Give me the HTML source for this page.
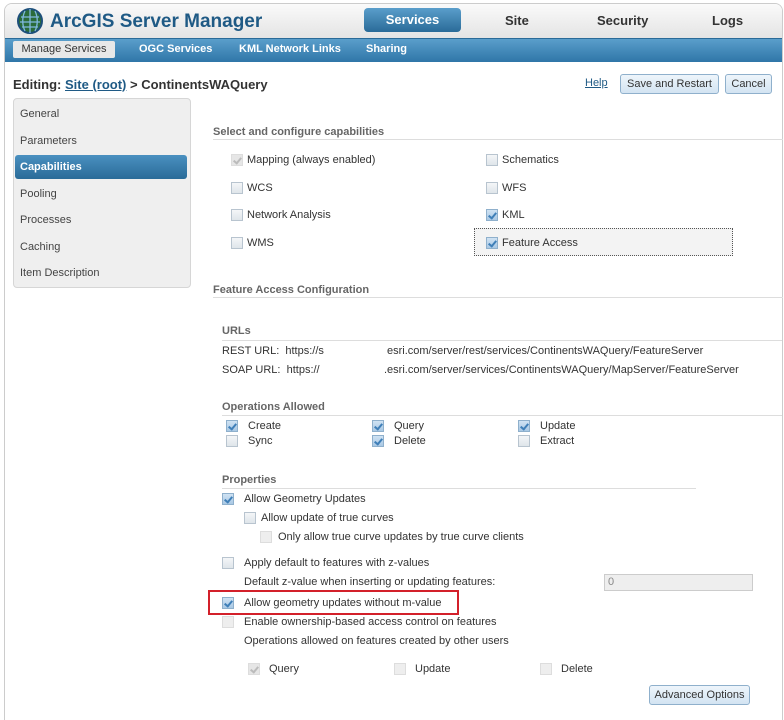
<!DOCTYPE html>
<html><head><meta charset="utf-8"><style>
*{margin:0;padding:0;box-sizing:border-box}
html,body{width:784px;height:720px;overflow:hidden}
body{background:#fff;font-family:"Liberation Sans",Arial,sans-serif;font-size:11px;color:#333;position:relative}
.a{position:absolute;white-space:nowrap}
.frame{position:absolute;left:4px;top:3px;width:779px;height:717px;border:1px solid #ccc;border-bottom:none;border-radius:8px 8px 0 0}
.hdr{position:absolute;left:5px;top:4px;width:777px;height:34px;background:linear-gradient(#fafafa,#e4e4e4);border-radius:7px 7px 0 0}
.bar{position:absolute;left:5px;top:38px;width:777px;height:24px;background:linear-gradient(#5a9ecb,#2f76a8);border-top:1px solid #2a6b98}
.cb{position:absolute;width:12px;height:12px;border:1px solid #b8c4cf;background:linear-gradient(#f4f6f8,#dfe5ea)}
.cb.c::after{content:"";position:absolute;left:3px;top:1px;width:3px;height:6px;border:solid #3f7fb8;border-width:0 2px 2px 0;transform:rotate(40deg)}
.cb.c{background:linear-gradient(#cfe2f3,#a9c8e4);border-color:#8fb0cc}
.cb.d{border-color:#ddd;background:#eee}
.cb.d.c::after{border-color:#bbb}
.cb.d.c{background:#e6e6e6}
.sec{position:absolute;font-weight:bold;color:#666;font-size:11px}
.ln{position:absolute;height:1px;background:#ddd}
.btn{position:absolute;height:20px;border:1px solid #8fb0cc;border-radius:3px;background:linear-gradient(#eef5fb,#d3e4f2);color:#333;font-size:11px;text-align:center;line-height:18px}
.side div{position:absolute;left:20px;color:#444}
</style></head><body>
<div class="frame"></div>
<div class="hdr"></div>
<svg class="a" style="left:17px;top:8px" width="26" height="26" viewBox="0 0 26 26"><circle cx="13" cy="13" r="12" fill="#2a6b3a"/><circle cx="13" cy="13" r="12" fill="none" stroke="#1d4f7a" stroke-width="2"/><path d="M4 9h18M3 14h20M5 19h16M13 1v24M8 3c-3 6-3 14 0 20M18 3c3 6 3 14 0 20" stroke="#7fb8e0" stroke-width="1.3" fill="none"/></svg>
<div class="a" style="left:50px;top:11px;font-size:19px;font-weight:bold;color:#1f5a85">ArcGIS Server Manager</div>
<div class="a" style="left:364px;top:8px;width:97px;height:24px;border-radius:4px;background:linear-gradient(#5a9ecb,#2a6b98);color:#fff;font-weight:bold;font-size:13px;text-align:center;line-height:24px">Services</div>
<div class="a" style="left:505px;top:13px;font-weight:bold;font-size:13px;color:#333">Site</div>
<div class="a" style="left:597px;top:13px;font-weight:bold;font-size:13px;color:#333">Security</div>
<div class="a" style="left:712px;top:13px;font-weight:bold;font-size:13px;color:#333">Logs</div>
<div class="bar"></div>
<div class="a" style="left:13px;top:41px;width:102px;height:17px;background:#e8e8e8;border-radius:2px;color:#333;text-align:center;line-height:17px">Manage Services</div>
<div class="a" style="left:139px;top:43px;color:#fff;font-weight:bold;font-size:11px">OGC Services</div>
<div class="a" style="left:239px;top:43px;color:#fff;font-weight:bold;font-size:11px">KML Network Links</div>
<div class="a" style="left:366px;top:43px;color:#fff;font-weight:bold;font-size:11px">Sharing</div>
<div class="a" style="left:13px;top:77px;font-size:13px;font-weight:bold;color:#333">Editing: <span style="color:#1f5a85;text-decoration:underline">Site (root)</span> &gt; ContinentsWAQuery</div>
<div class="a" style="left:585px;top:77px;color:#1f5a85;text-decoration:underline;font-size:11px">Help</div>
<div class="btn" style="left:620px;top:74px;width:99px">Save and Restart</div>
<div class="btn" style="left:725px;top:74px;width:47px">Cancel</div>
<div class="a" style="left:13px;top:98px;width:178px;height:190px;background:#efefef;border:1px solid #d6d6d6;border-radius:4px"></div>
<div class="a" style="left:15px;top:155px;width:172px;height:24px;background:linear-gradient(#4a90c0,#2a6b98);border-radius:3px"></div>
<div class="side">
<div style="top:108px">General</div>
<div style="top:135px">Parameters</div>
<div style="top:161px;color:#fff;font-weight:bold">Capabilities</div>
<div style="top:188px">Pooling</div>
<div style="top:214px">Processes</div>
<div style="top:241px">Caching</div>
<div style="top:267px">Item Description</div>
</div>
<div class="sec" style="left:213px;top:126px">Select and configure capabilities</div>
<div class="ln" style="left:213px;top:139px;width:570px"></div>
<div class="cb d c" style="left:231px;top:154px"></div><div class="a" style="left:247px;top:154px">Mapping (always enabled)</div>
<div class="cb" style="left:231px;top:182px"></div><div class="a" style="left:247px;top:182px">WCS</div>
<div class="cb" style="left:231px;top:209px"></div><div class="a" style="left:247px;top:209px">Network Analysis</div>
<div class="cb" style="left:231px;top:237px"></div><div class="a" style="left:247px;top:237px">WMS</div>
<div class="cb" style="left:486px;top:154px"></div><div class="a" style="left:502px;top:154px">Schematics</div>
<div class="cb" style="left:486px;top:182px"></div><div class="a" style="left:502px;top:182px">WFS</div>
<div class="cb c" style="left:486px;top:209px"></div><div class="a" style="left:502px;top:209px">KML</div>
<div class="a" style="left:474px;top:228px;width:259px;height:28px;border:1px dotted #555;background:#f3f3f3"></div>
<div class="cb c" style="left:486px;top:237px"></div><div class="a" style="left:502px;top:237px">Feature Access</div>
<div class="sec" style="left:213px;top:284px">Feature Access Configuration</div>
<div class="ln" style="left:213px;top:297px;width:570px"></div>
<div class="sec" style="left:222px;top:325px">URLs</div>
<div class="ln" style="left:222px;top:340px;width:560px"></div>
<div class="a" style="left:222px;top:345px">REST URL:&nbsp; https://s</div>
<div class="a" style="left:387px;top:345px">esri.com/server/rest/services/ContinentsWAQuery/FeatureServer</div>
<div class="a" style="left:222px;top:364px">SOAP URL:&nbsp; https://</div>
<div class="a" style="left:384px;top:364px">.esri.com/server/services/ContinentsWAQuery/MapServer/FeatureServer</div>
<div class="sec" style="left:222px;top:401px">Operations Allowed</div>
<div class="ln" style="left:222px;top:415px;width:560px"></div>
<div class="cb c" style="left:226px;top:420px"></div><div class="a" style="left:248px;top:420px">Create</div>
<div class="cb" style="left:226px;top:435px"></div><div class="a" style="left:248px;top:435px">Sync</div>
<div class="cb c" style="left:372px;top:420px"></div><div class="a" style="left:394px;top:420px">Query</div>
<div class="cb c" style="left:372px;top:435px"></div><div class="a" style="left:394px;top:435px">Delete</div>
<div class="cb c" style="left:518px;top:420px"></div><div class="a" style="left:540px;top:420px">Update</div>
<div class="cb" style="left:518px;top:435px"></div><div class="a" style="left:540px;top:435px">Extract</div>
<div class="sec" style="left:222px;top:474px">Properties</div>
<div class="ln" style="left:222px;top:488px;width:474px"></div>
<div class="cb c" style="left:222px;top:493px"></div><div class="a" style="left:244px;top:493px">Allow Geometry Updates</div>
<div class="cb" style="left:244px;top:512px"></div><div class="a" style="left:261px;top:512px">Allow update of true curves</div>
<div class="cb d" style="left:260px;top:531px"></div><div class="a" style="left:278px;top:531px">Only allow true curve updates by true curve clients</div>
<div class="cb" style="left:222px;top:557px"></div><div class="a" style="left:244px;top:557px">Apply default to features with z-values</div>
<div class="a" style="left:244px;top:576px">Default z-value when inserting or updating features:</div>
<div class="a" style="left:604px;top:574px;width:149px;height:17px;border:1px solid #ccc;background:#eee;padding-left:3px;line-height:15px;color:#888">0</div>
<div class="a" style="left:208px;top:590px;width:251px;height:25px;border:2px solid #d3202a"></div>
<div class="cb c" style="left:222px;top:597px"></div><div class="a" style="left:244px;top:597px">Allow geometry updates without m-value</div>
<div class="cb d" style="left:222px;top:616px"></div><div class="a" style="left:244px;top:616px">Enable ownership-based access control on features</div>
<div class="a" style="left:244px;top:635px">Operations allowed on features created by other users</div>
<div class="cb d c" style="left:248px;top:663px"></div><div class="a" style="left:269px;top:663px">Query</div>
<div class="cb d" style="left:394px;top:663px"></div><div class="a" style="left:415px;top:663px">Update</div>
<div class="cb d" style="left:540px;top:663px"></div><div class="a" style="left:561px;top:663px">Delete</div>
<div class="btn" style="left:649px;top:685px;width:101px">Advanced Options</div>
</body></html>
